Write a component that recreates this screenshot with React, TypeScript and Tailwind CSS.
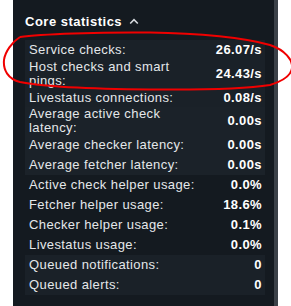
import React from "react";

type Row = { label: string; value: string };

const groups: { bg: string; rows: Row[] }[] = [
  {
    bg: "bg-[#1a2128]",
    rows: [
      { label: "Service checks:", value: "26.07/s" },
      { label: "Host checks and smart pings:", value: "24.43/s" },
      { label: "Livestatus connections:", value: "0.08/s" },
    ],
  },
  {
    bg: "bg-[#1b2229]",
    rows: [
      { label: "Average active check latency:", value: "0.00s" },
      { label: "Average checker latency:", value: "0.00s" },
      { label: "Average fetcher latency:", value: "0.00s" },
    ],
  },
  {
    bg: "bg-[#141a20]",
    rows: [
      { label: "Active check helper usage:", value: "0.0%" },
      { label: "Fetcher helper usage:", value: "18.6%" },
      { label: "Checker helper usage:", value: "0.1%" },
      { label: "Livestatus usage:", value: "0.0%" },
    ],
  },
  {
    bg: "bg-[#1a2128]",
    rows: [
      { label: "Queued notifications:", value: "0" },
      { label: "Queued alerts:", value: "0" },
    ],
  },
];

export default function App() {
  return (
    <div
      className="relative w-[291px] h-[306px] bg-white overflow-hidden flex"
      style={{ fontFamily: '"Liberation Sans", Arial, sans-serif' }}
    >
      <div className="w-[13px] shrink-0 bg-white" />
      <div className="w-[261px] shrink-0 bg-[#141a20] pl-[12px] pr-[9px] pt-[14px]">
        <div className="flex items-center gap-[7px] h-[16px] text-[13px] leading-[16px] font-bold tracking-[0.5px] text-white">
          <span>Core statistics</span>
          <svg width="10" height="7" viewBox="0 0 10 7" className="mt-[-2px]">
            <path d="M1.2 5.5 L5 1.7 L8.8 5.5" fill="none" stroke="#d6dade" strokeWidth="1.6" />
          </svg>
        </div>
        <div className="mt-[10px] flex flex-col">
          {groups.map((g, gi) => (
            <div key={gi} className={`${g.bg} flex flex-col`}>
              {g.rows.map((r, ri) => (
                <div
                  key={ri}
                  className="flex items-center min-h-[20px] text-[13px] leading-[13.7px] tracking-[0.4px]"
                >
                  <div className="w-[176px] shrink-0 pl-[4px] text-[#e4e7ea]">{r.label}</div>
                  <div className="flex-1 text-right pr-[3px] font-bold text-white">{r.value}</div>
                </div>
              ))}
            </div>
          ))}
        </div>
      </div>
      <div className="w-[4px] shrink-0 bg-[#3b4148]" />
      <div className="flex-1 bg-white" />
      <svg
        className="absolute inset-0 pointer-events-none"
        width="291"
        height="306"
        viewBox="0 0 291 306"
      >
        <path
          d="M20 37 C40 34 100 32 150 32.5 C200 33 245 38 270 45 C285 50 293 60 292 68 C291 76 283 81 270 85 C245 89 200 90 150 89.5 C100 89 45 87 20 82 C8 79 3 70 4 60 C5 52 12 42 20 37"
          fill="none"
          stroke="#f00000"
          strokeWidth="2"
        />
      </svg>
    </div>
  );
}
